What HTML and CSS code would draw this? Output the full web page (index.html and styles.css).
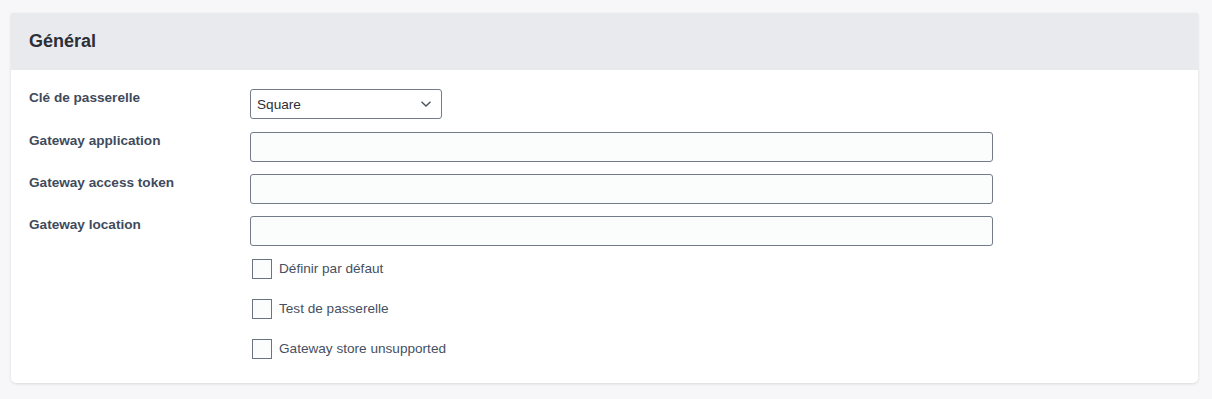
FILE: index.html
```html
<html>
<head>
  <meta charset="utf-8">
  <title>Général</title>
  <link rel="stylesheet" href="styles.css">
</head>
<body>
  <div class="card">
    <div class="card-header">
      <h2 class="card-title">Général</h2>
    </div>
    <div class="card-body">
      <div class="form-row form-row-select">
        <label class="form-label">Clé de passerelle</label>
        <div class="form-field">
          <div class="select">
            <span>Square</span>
            <svg width="12" height="8" viewBox="0 0 12 8"><path d="M1.5 1.8 L6 6 L10.5 1.8" fill="none" stroke="#4a5260" stroke-width="1.4"/></svg>
          </div>
        </div>
      </div>
      <div class="form-row">
        <label class="form-label">Gateway application</label>
        <div class="form-field"><input class="input" type="text"></div>
      </div>
      <div class="form-row">
        <label class="form-label">Gateway access token</label>
        <div class="form-field"><input class="input" type="text"></div>
      </div>
      <div class="form-row">
        <label class="form-label">Gateway location</label>
        <div class="form-field"><input class="input" type="text"></div>
      </div>

      <div class="checks">
        <div class="check"><span class="box"></span>Définir par défaut</div>
        <div class="check"><span class="box"></span>Test de passerelle</div>
        <div class="check"><span class="box"></span>Gateway store unsupported</div>
      </div>
    </div>
  </div>
</body>
</html>
```

FILE: styles.css
```css
* {
  font-family: "Liberation Sans", Arial, sans-serif;
  box-sizing: border-box;
}

body {
  margin: 0;
  padding: 13px 14px 0 11px;
  background-color: #f7f7f9;
}

.card {
  background-color: #fff;
  border-radius: 0 0 5px 5px;
  box-shadow: 0 1px 3px rgba(0, 0, 0, .12);
}

.card-header {
  background-color: #e9eaee;
  height: 57px;
  padding: 0 18px;
  display: flex;
  align-items: center;
}

.card-title {
  margin: 0;
  font-size: 18px;
  font-weight: 700;
  color: #2b2f36;
}

.card-body {
  padding: 19px 18px 25px 18px;
}

.form-row {
  display: flex;
  margin-bottom: 12px;
}

.form-row-select {
  margin-bottom: 13px;
}

.form-label {
  width: 221px;
  flex-shrink: 0;
  padding-top: 1px;
  font-size: 13.6px;
  font-weight: 700;
  color: #3f4a5c;
}

.form-field {
  flex-grow: 1;
}

.select {
  width: 192px;
  height: 30px;
  border: 1px solid #737b88;
  border-radius: 3px;
  display: flex;
  align-items: center;
  justify-content: space-between;
  padding: 0 9px 0 6px;
  font-size: 13.6px;
  color: #2b2f36;
}

.input {
  display: block;
  width: 743px;
  height: 30px;
  margin: 0;
  border: 1px solid #737b88;
  border-radius: 3px;
  background-color: #fbfdfd;
}

.checks {
  padding-left: 223px;
}

.check {
  display: flex;
  align-items: center;
  height: 20px;
  margin-bottom: 20px;
  font-size: 13.6px;
  color: #46505f;
}

.check:last-child {
  margin-bottom: 0;
}

.box {
  width: 20px;
  height: 20px;
  border: 1px solid #6b7380;
  background-color: #fbfdfd;
  margin-right: 7px;
  margin-top: 2px;
}
```
